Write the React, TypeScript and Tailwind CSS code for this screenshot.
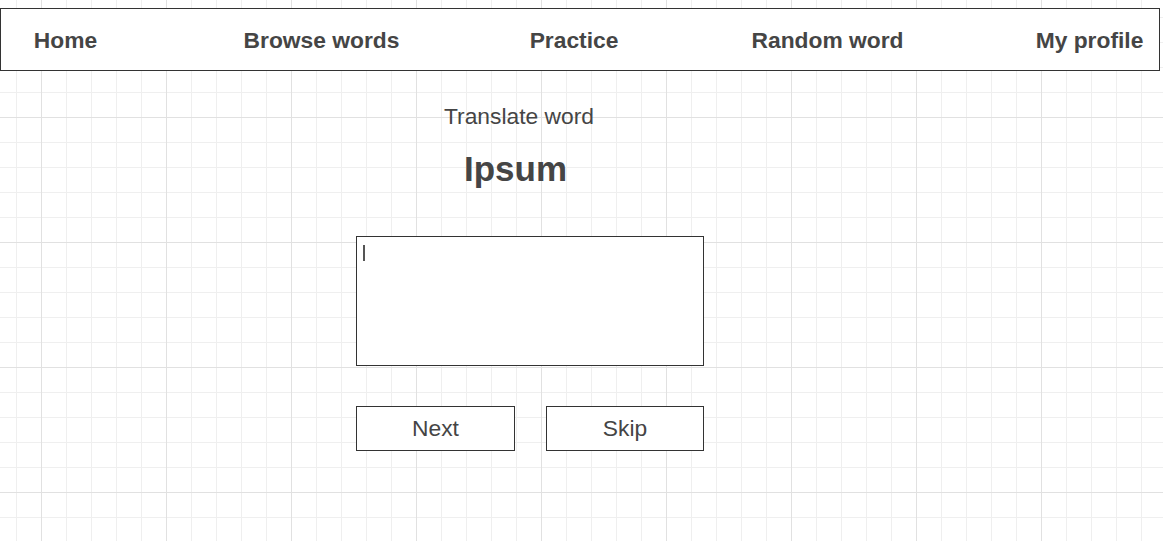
import * as React from 'react';

const navItems = [
  { label: 'Home', cls: 'w-[129px]' },
  { label: 'Browse words', cls: 'w-[383px]' },
  { label: 'Practice', cls: 'w-[122px]' },
  { label: 'Random word', cls: 'w-[385px]' },
  { label: 'My profile', cls: 'flex-1' },
];

export default function App() {
  return (
    <div className="h-[541px] w-full overflow-hidden bg-white pt-[8px] font-['Liberation_Sans',Arial,sans-serif] text-[#454545] [background-image:linear-gradient(to_right,#e1e1e1_1px,transparent_1px),linear-gradient(to_bottom,#e1e1e1_1px,transparent_1px),linear-gradient(to_right,#efefef_1px,transparent_1px),linear-gradient(to_bottom,#efefef_1px,transparent_1px)] [background-size:125px_125px,125px_125px,25px_25px,25px_25px] [background-position:41px_0,0_117px,16px_0,0_17px]">
      <nav className="flex h-[63px] w-[1160px] items-center border border-[#333] bg-white pt-[2px]">
        {navItems.map((item) => (
          <span
            key={item.label}
            className={`${item.cls} text-center text-[22.8px] leading-[23px] font-bold whitespace-nowrap`}
          >
            {item.label}
          </span>
        ))}
      </nav>

      <div className="flex flex-col items-start">
        <p className="mt-[34px] ml-[444px] text-[22.8px] leading-[23px]">Translate word</p>
        <h1 className="mt-[23px] ml-[464px] text-[35px] leading-[35px] font-bold">Ipsum</h1>

        <div className="mt-[50px] ml-[356px] h-[130px] w-[348px] border border-[#333] bg-white pt-[8px] pl-[6px]">
          <div className="h-[16px] w-[2px] bg-[#555]" />
        </div>

        <div className="mt-[40px] ml-[356px] flex gap-[31px]">
          <button className="h-[45px] w-[159px] border border-[#333] bg-white text-[22.8px] leading-none">
            Next
          </button>
          <button className="h-[45px] w-[158px] border border-[#333] bg-white text-[22.8px] leading-none">
            Skip
          </button>
        </div>
      </div>
    </div>
  );
}
